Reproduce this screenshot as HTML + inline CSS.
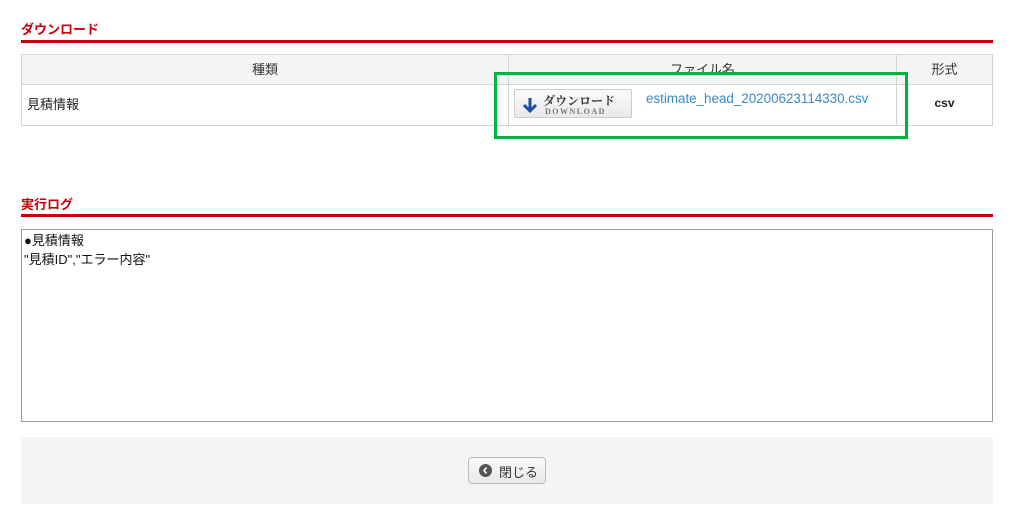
<!DOCTYPE html>
<html><head><meta charset="utf-8"><style>
body{margin:0;background:#fff;font-family:"Liberation Sans","Noto Sans CJK JP",sans-serif;width:1015px;height:529px;position:relative;overflow:hidden;color:#222}
.h{position:absolute;left:21px;color:#c8000a;font-size:13px;font-weight:bold}
.line{position:absolute;left:21px;width:972px;height:3px;background:#c8000a}
table{position:absolute;left:21px;top:54px;width:972px;border-collapse:collapse;font-size:13px}
td,th{border:1px solid #d4d4d4;padding:0}
th{background:#f4f4f4;height:26px;font-weight:normal;color:#333;padding-bottom:3px}
td{height:36px;padding-bottom:4px}
.green{position:absolute;left:494px;top:72px;width:408px;height:61px;border:3px solid #00b33c;box-sizing:content-box}
.btn{position:absolute;left:514px;top:89px;width:118px;height:29px;border:1px solid #ccc;border-radius:2px;background:linear-gradient(#fbfbfb,#e9e9e9);box-sizing:border-box}
.ta{position:absolute;left:21px;top:229px;width:972px;height:193px;border:1px solid #999;box-sizing:border-box;font-size:13px;padding:1px 2px;line-height:19px;color:#111}
.foot{position:absolute;left:21px;top:437px;width:972px;height:67px;background:#f4f4f4}
.close{position:absolute;left:468px;top:457px;width:78px;height:27px;border:1px solid #bbb;border-radius:4px;background:linear-gradient(#fafafa,#e8e8e8);box-sizing:border-box;font-size:13px}
</style></head><body>
<div class="h" style="top:19px">ダウンロード</div>
<div class="line" style="top:40px"></div>
<table>
<tr><th style="width:486px">種類</th><th style="width:387px">ファイル名</th><th>形式</th></tr>
<tr><td style="padding-left:5px">見積情報</td><td></td><td style="text-align:center;font-size:12px;font-weight:bold">csv</td></tr>
</table>
<div class="btn">
<svg style="position:absolute;left:6px;top:6px" width="18" height="18" viewBox="0 0 18 18"><path d="M9 2v12M3 9l6 6 6-6" stroke="#1b4f9c" stroke-width="3" fill="none"/></svg>
<div style="position:absolute;left:28px;top:2px;font-size:12px;font-weight:bold;color:#333;font-family:'Noto Serif CJK SC',serif">ダウンロード</div>
<div style="position:absolute;left:30px;top:17px;font-size:8px;letter-spacing:1.5px;color:#777;font-family:'Liberation Serif',serif;font-weight:bold">DOWNLOAD</div>
</div>
<div style="position:absolute;left:646px;top:91px;font-size:13.4px;color:#3a8ac6">estimate_head_20200623114330.csv</div>
<div class="green"></div>
<div class="h" style="top:194px">実行ログ</div>
<div class="line" style="top:214px"></div>
<div class="ta">●見積情報<br>"見積ID","エラー内容"</div>
<div class="foot"></div>
<div class="close">
<span style="position:absolute;left:10px;top:6px;width:13px;height:13px;border-radius:50%;background:#555"></span>
<svg style="position:absolute;left:10px;top:6px" width="13" height="13"><path d="M7.5 3.5L5 6.5l2.5 3" stroke="#fff" stroke-width="1.6" fill="none"/></svg>
<span style="position:absolute;left:30px;top:4px;color:#333">閉じる</span>
</div>
</body></html>
